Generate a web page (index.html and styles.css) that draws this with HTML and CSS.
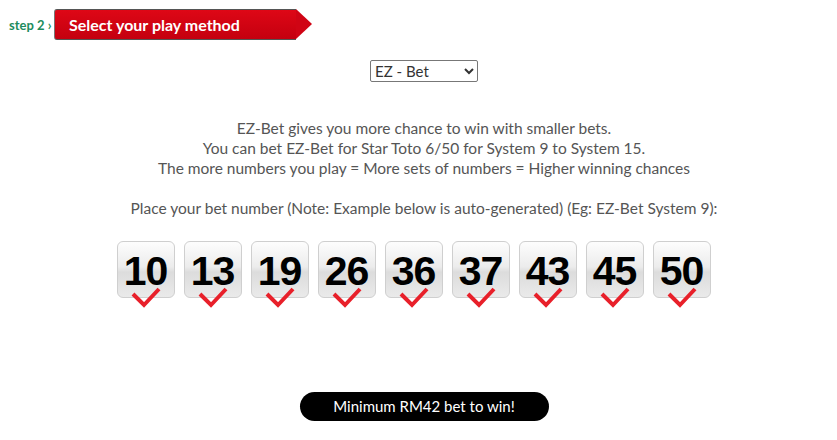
FILE: index.html
```html
<!DOCTYPE html>
<html lang="en">
<head>
    <meta charset="UTF-8">
    <title>Select your play method</title>
    <link rel="stylesheet" href="styles.css">
</head>
<body>

    <!-- Step header -->
    <div class="step-bar">
        <span class="step-label">step 2 ›</span>
        <div class="step-title">Select your play method</div>
    </div>

    <div class="content">
        <select class="method-select">
            <option>EZ - Bet</option>
            <option>Ordinary</option>
            <option>System</option>
        </select>

        <p class="info">
            EZ-Bet gives you more chance to win with smaller bets.<br>
            You can bet EZ-Bet for Star Toto 6/50 for System 9 to System 15.<br>
            The more numbers you play = More sets of numbers = Higher winning chances
        </p>

        <p class="info">Place your bet number (Note: Example below is auto-generated) (Eg: EZ-Bet System 9):</p>

        <!-- Numbers -->
        <div class="ball-list">
            <div class="ball">10<svg class="tick" viewBox="0 0 32 24"><polyline points="3,9 14,20 29,4"/></svg></div>
            <div class="ball">13<svg class="tick" viewBox="0 0 32 24"><polyline points="3,9 14,20 29,4"/></svg></div>
            <div class="ball">19<svg class="tick" viewBox="0 0 32 24"><polyline points="3,9 14,20 29,4"/></svg></div>
            <div class="ball">26<svg class="tick" viewBox="0 0 32 24"><polyline points="3,9 14,20 29,4"/></svg></div>
            <div class="ball">36<svg class="tick" viewBox="0 0 32 24"><polyline points="3,9 14,20 29,4"/></svg></div>
            <div class="ball">37<svg class="tick" viewBox="0 0 32 24"><polyline points="3,9 14,20 29,4"/></svg></div>
            <div class="ball">43<svg class="tick" viewBox="0 0 32 24"><polyline points="3,9 14,20 29,4"/></svg></div>
            <div class="ball">45<svg class="tick" viewBox="0 0 32 24"><polyline points="3,9 14,20 29,4"/></svg></div>
            <div class="ball">50<svg class="tick" viewBox="0 0 32 24"><polyline points="3,9 14,20 29,4"/></svg></div>
        </div>

        <div class="min-bet">Minimum RM42 bet to win!</div>
    </div>

</body>
</html>
```

FILE: styles.css
```css
body {
    font-family: Lato, "Open Sans", sans-serif;
    background: #fff;
    color: #555;
    margin: 0;
    padding: 0;
}

.step-bar {
    display: flex;
    align-items: center;
    padding: 9px 0 0 9px;
}

.step-label {
    color: #1d8c5d;
    font-weight: bold;
    font-size: 13px;
    width: 45px;
}

.step-title {
    position: relative;
    height: 29px;
    width: 227px;
    line-height: 29px;
    padding-left: 14px;
    background: linear-gradient(#de0716, #c4000f);
    border-top: 1px solid #555;
    border-bottom: 1px solid #555;
    border-left: 1px solid #777;
    border-radius: 3px 0 0 3px;
    color: #fff;
    font-weight: bold;
    font-size: 16px;
}

.step-title::after {
    content: "";
    position: absolute;
    right: -16px;
    top: -1px;
    border-top: 15.5px solid transparent;
    border-bottom: 15.5px solid transparent;
    border-left: 16px solid #d00414;
}

.content {
    display: flex;
    flex-direction: column;
    align-items: center;
    padding-left: 11px;
}

.method-select {
    margin-top: 20px;
    width: 108px;
    height: 22px;
    font-family: Lato, sans-serif;
    font-size: 15px;
    color: #333;
    border: 1px solid #777;
    border-radius: 2px;
    background: #fff;
}

.info {
    text-align: center;
    font-size: 15.5px;
    line-height: 20px;
    margin: 0;
}

.info:first-of-type {
    margin-top: 36px;
    margin-bottom: 20px;
}

.ball-list {
    display: flex;
    gap: 9px;
    margin-top: 23px;
    margin-right: 21px;
}

.ball {
    position: relative;
    width: 56px;
    height: 55px;
    border: 1px solid #cfcfcf;
    border-radius: 6px;
    background: linear-gradient(#fdfdfd, #ececec 45%, #dcdcdc 55%, #eaeaea);
    color: #000;
    font-family: "Liberation Sans", Arial, sans-serif;
    font-weight: bold;
    font-size: 41px;
    letter-spacing: -1px;
    text-align: center;
    line-height: 58px;
}

.tick {
    position: absolute;
    left: 12px;
    top: 43px;
    width: 32px;
    height: 24px;
    fill: none;
    stroke: #e8202a;
    stroke-width: 4;
}

.min-bet {
    margin-top: 94px;
    width: 249px;
    height: 29px;
    line-height: 29px;
    background: #000;
    color: #fff;
    border-radius: 15px;
    text-align: center;
    font-size: 15px;
}
```
